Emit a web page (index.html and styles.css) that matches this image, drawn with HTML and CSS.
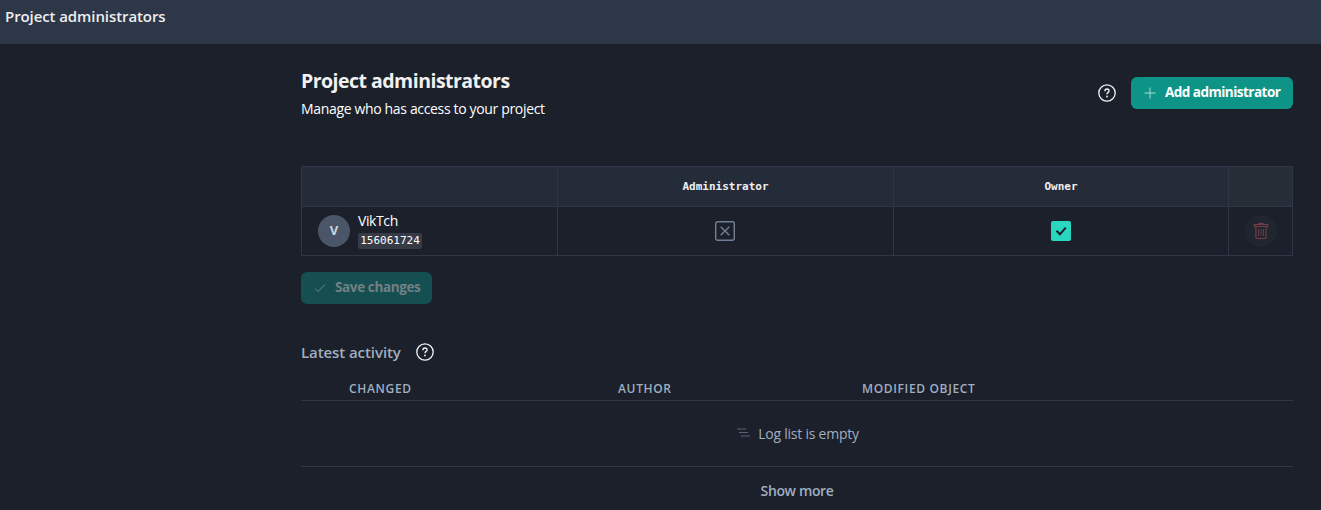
FILE: index.html
```html
<!DOCTYPE html>
<html lang="en">
<head>
<meta charset="utf-8">
<title>Project administrators</title>
<link rel="stylesheet" href="styles.css">
</head>
<body>
<header class="topbar"><span class="topbar-title">Project administrators</span></header>
<main class="content">
  <section class="intro">
    <div class="intro-text">
      <h1 class="title"><span>Project administrators</span></h1>
      <p class="subtitle"><span>Manage who has access to your project</span></p>
    </div>
    <svg class="help" viewBox="0 0 18 18"><circle cx="9" cy="9" r="8.2"/><path d="M6.9 7.2C6.9 5.8 7.8 5 9 5s2.1.8 2.1 1.9C11.1 8.4 9 8.4 9 10.2"/><circle class="dot" cx="9" cy="12.5" r=".9"/></svg>
    <button class="btn add"><svg class="plus" viewBox="0 0 12 12"><path d="M6 .5v11M.5 6h11"/></svg><span>Add administrator</span></button>
  </section>
  <section class="grid">
    <div class="cell head"></div>
    <div class="cell head"><span>Administrator</span></div>
    <div class="cell head"><span>Owner</span></div>
    <div class="cell head last"></div>
    <div class="cell user">
      <div class="avatar">V</div>
      <div class="who"><span class="name">VikTch</span><code class="uid">156061724</code></div>
    </div>
    <div class="cell denied"><svg class="box" viewBox="0 0 20 20"><rect x=".7" y=".7" width="18.6" height="18.6" rx="2"/><path d="M5.7 5.7l8.6 8.6M14.3 5.7l-8.6 8.6"/></svg></div>
    <div class="cell"><svg class="box checked" viewBox="0 0 20 20"><rect width="20" height="20" rx="2"/><path d="M5.5 9.7l3.4 3.5 5.9-6.5"/></svg></div>
    <div class="cell"><div class="remove"><svg class="trash" viewBox="0 0 16 18"><path d="M5.500 1.500h5M1.300 2.500h13.400v2H1.300zM2.900 4.500v10.800c0 .8.4 1.200 1.200 1.200h7.800c.8 0 1.200-.4 1.200-1.200V4.500"/><path class="ribs" d="M5.500 7v7M8 7v7M10.500 7v7"/></svg></div></div>
  </section>
  <button class="btn save"><svg class="tick" viewBox="0 0 12 12"><path d="M1 6.500l3 3 7-7"/></svg><span>Save changes</span></button>
  <div class="activity">
    <h2 class="activity-title">Latest activity</h2>
    <svg class="help" viewBox="0 0 18 18"><circle cx="9" cy="9" r="8.2"/><path d="M6.9 7.2C6.9 5.8 7.8 5 9 5s2.1.8 2.1 1.9C11.1 8.4 9 8.4 9 10.2"/><circle class="dot" cx="9" cy="12.5" r=".9"/></svg>
  </div>
  <div class="log-head"><span class="changed">Changed</span><span class="author">Author</span><span class="object">Modified object</span></div>
  <div class="log-empty"><svg class="lines" viewBox="0 0 14 9"><path d="M0 1h9M2 4.500h9M4 8h9"/></svg><span>Log list is empty</span></div>
  <div class="more"><span>Show more</span></div>
</main>
</body>
</html>
```
FILE: styles.css
```css
* { box-sizing: border-box; }
body { margin: 0; height: 510px; overflow: hidden; background: #1b202b; color: #fff; font: 14px/20px "Open Sans", "Noto Sans", sans-serif; }
h1, h2, p { margin: 0; }
svg { display: block; flex: none; fill: none; stroke: currentColor; }
.topbar { height: 44px; padding: 6px 5px; background: #2e3748; color: #edeef0; font-size: 15px; font-weight: 600; }
.topbar-title { letter-spacing: -.09px; }
.content { width: 992px; margin-left: 301px; padding-top: 22px; }
.intro { display: flex; height: 100px; align-items: flex-start; }
.intro-text { flex: 1; }
.title { font-size: 19.5px; line-height: 30px; font-weight: 700; color: #f1f1f1; letter-spacing: -.52px; }
.subtitle { margin-top: 2px; line-height: 21px; letter-spacing: -.34px; }
.help { width: 18px; height: 18px; color: #f3f3f4; stroke-width: 1.3; }
.help .dot { fill: currentColor; stroke: none; }
.intro .help { margin: 18px 15px 0 0; }
.btn { display: flex; align-items: center; height: 32px; border: 0; border-radius: 6px; padding: 0 12px 2px; font: 700 13.5px/20px "Open Sans", "Noto Sans", sans-serif; white-space: nowrap; }
.add { width: 162px; margin-top: 11px; background: #0e9486; color: #fff; letter-spacing: -.52px; }
.plus { width: 12px; height: 12px; margin: 2px 9px 0 1px; color: #a5dcd3; stroke-width: 1; }
.grid { display: grid; grid-template: 41px 49px / 257px 336px 335px 64px; width: 992px; }
.cell { display: flex; align-items: center; justify-content: center; border: 0 solid #2d3748; border-width: 0 1px 1px 0; }
.head { background: #252c39; border-top-width: 1px; font: 700 11px/16px "DejaVu Sans Mono", monospace; color: #f0f0f0; }
.last { background: #272d36; }
.head:first-child, .user { border-left-width: 1px; }
.user { justify-content: flex-start; padding-left: 16px; gap: 8px; }
.denied { padding-right: 2px; }
.avatar { width: 32px; height: 32px; border-radius: 50%; background: #4a5568; color: #cbd5e0; text-align: center; font-weight: 700; font-size: 13px; line-height: 31px; }
.who { display: flex; flex-direction: column; align-items: flex-start; margin-top: -2px; }
.name { line-height: 20px; margin-top: -1px; letter-spacing: -.4px; }
.uid { margin-top: 2px; width: 64px; height: 16px; border-radius: 2px; background: #363b45; font: 11px/16px "DejaVu Sans Mono", monospace; text-align: center; }
.box { width: 20px; height: 20px; color: #718096; stroke-width: 1.4; }
.checked { color: #1a202c; stroke-width: 2; }
.checked rect { fill: #2bd6c1; stroke: none; }
.remove { display: flex; align-items: center; justify-content: center; width: 32px; height: 32px; border-radius: 50%; background: #20252f; }
.trash { width: 16px; height: 18px; color: #743f49; stroke-width: 1.15; }
.ribs { stroke-width: .9; }
.save { width: 131px; margin-top: 16px; background: #164f51; color: #728084; letter-spacing: -.38px; }
.tick { width: 12px; height: 12px; margin: 2px 9px 0 1px; stroke-width: 1; }
.activity { display: flex; align-items: center; height: 20px; margin-top: 38px; }
.activity-title { width: 115px; font-size: 15px; line-height: 20px; font-weight: 600; color: #a0aec0; letter-spacing: -.08px; }
.log-head { display: flex; height: 39px; padding: 18px 0 0 48px; border-bottom: 1px solid #2d3748; color: #a0aec0; font-size: 12px; line-height: 18px; font-weight: 600; text-transform: uppercase; letter-spacing: .65px; }
.changed { width: 269px; }
.author { width: 244px; }
.log-empty { display: flex; align-items: center; justify-content: center; gap: 7px; height: 66px; padding-left: 2px; border-bottom: 1px solid #2d3748; color: #a0aec0; letter-spacing: -.24px; }
.lines { width: 14px; height: 9px; color: #58647a; margin-bottom: 3px; }
.more { padding-top: 14px; text-align: center; font-weight: 600; color: #a0aec0; letter-spacing: -.38px; }
```
